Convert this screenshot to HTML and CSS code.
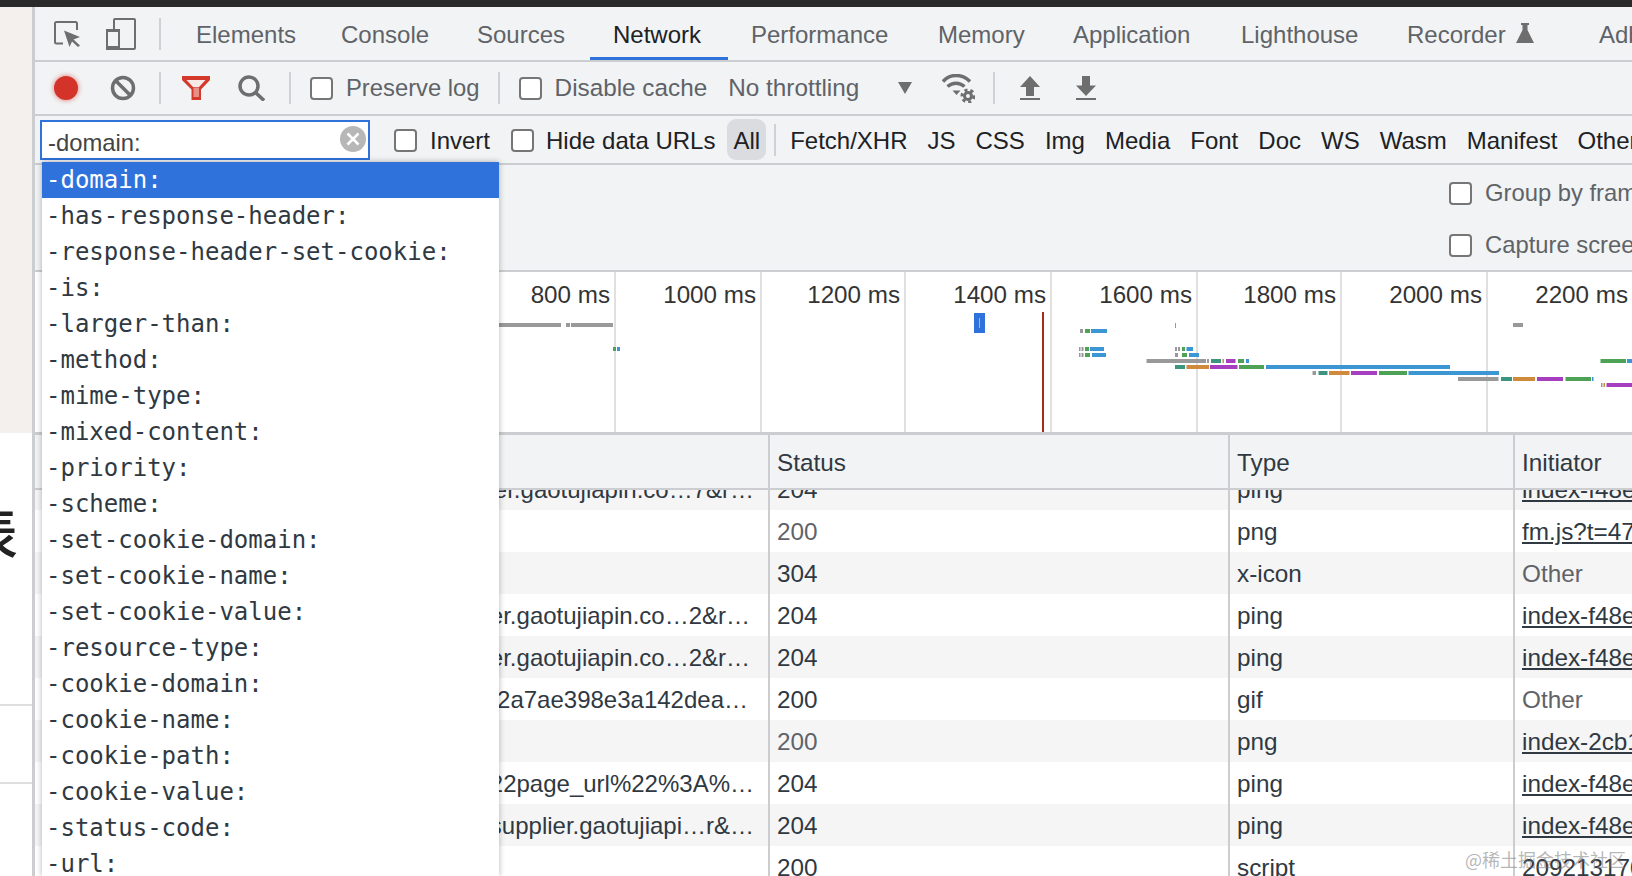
FILE: index.html
```html
<!DOCTYPE html>
<html lang="en">
<head>
<meta charset="utf-8">
<title>DevTools Network</title>
<link rel="stylesheet" href="styles.css">
</head>
<body>
<div class="app">
  <div class="topbar"></div>
  <div class="main">
    <aside class="page">
      <div class="page-upper"></div>
      <div class="page-lower">
        <div class="page-glyph">表</div>
        <div class="page-line first"></div>
        <div class="page-line second"></div>
      </div>
    </aside>
    <section class="devtools">
      <div class="scroll-mark"></div>
      <nav class="bar tabbar">
        <svg class="ic i-inspect" viewBox="0 0 26 26"><path class="ln" d="M9 22.500H2.500a1.500 1.500 0 0 1-1.500-1.500V2.500A1.500 1.500 0 0 1 2.500 1H21.500a1.500 1.500 0 0 1 1.500 1.500V9"/><path class="fl" d="M10 9.500 26 16l-6.500 2.500 6.500 6-2 1.500-6-5.500L15.500 26z"/></svg>
        <svg class="ic i-device" viewBox="0 0 30 32"><path class="ln" d="M8 11V2a1 1 0 0 1 1-1h19a1 1 0 0 1 1 1v28a1 1 0 0 1-1 1H14"/><rect class="ln" x="1" y="12" width="12" height="19" rx="1"/><rect class="fl" x="0" y="11" width="14" height="3"/><rect class="fl" x="0" y="28" width="14" height="4"/></svg>
        <span class="sep s-tabs"></span>
        <div class="tabs">
          <a class="tab">Elements</a>
          <a class="tab">Console</a>
          <a class="tab">Sources</a>
          <a class="tab active">Network</a>
          <a class="tab">Performance</a>
          <a class="tab">Memory</a>
          <a class="tab">Application</a>
          <a class="tab">Lighthouse</a>
          <a class="tab">Recorder<svg class="i-flask" viewBox="0 0 18 20"><path class="fl" d="M5 0h8v2h-1.500v5L18 20H0L6.500 7V2H5z"/></svg></a>
          <a class="tab">Adblock</a>
        </div>
      </nav>
      <div class="bar toolbar">
        <span class="record"></span>
        <svg class="ic i-clear" viewBox="0 0 26 26"><circle class="ln thick" cx="13" cy="13" r="10.500"/><path class="ln thick" d="M5.500 5.500l15 15"/></svg>
        <span class="sep s-clear"></span>
        <svg class="ic i-filter" viewBox="0 0 28 24"><path class="fun-o" d="M0 0h28v4l-9 9.500V24H9.500V13.500L0 4z"/><path class="fun-w" d="M4.500 4h19l-6.500 7h-6z"/><path class="fun-p" d="M11.500 11.500h5.500V21h-5.500z"/></svg>
        <svg class="ic i-search" viewBox="0 0 27 26"><circle class="ln thick" cx="11" cy="11" r="9"/><path class="ln thick" d="M17 17l9 8.500"/></svg>
        <span class="sep s-search"></span>
        <input class="cb cb-preserve" type="checkbox"><label class="lbl">Preserve log</label>
        <span class="sep s-preserve"></span>
        <input class="cb cb-cache" type="checkbox"><label class="lbl wide">Disable cache</label>
        <span class="lbl wide throttle">No throttling</span>
        <svg class="ic i-caret" viewBox="0 0 14 12"><path class="fl" d="M0 0h14L7 12z"/></svg>
        <svg class="ic i-wifi" viewBox="0 0 33 29"><path class="ln thick" d="M1 7.500C8-.5 20-.500 28 7.500"/><path class="ln thick" d="M5.500 12.500c5-4.500 12-4.500 17 0"/><path class="fl" d="M10.500 16.500h8L14.500 21z"/><circle class="ln gear" cx="26" cy="22" r="3.500"/><circle class="ln teeth" cx="26" cy="22" r="6"/></svg>
        <span class="sep s-wifi"></span>
        <svg class="ic i-arrow i-up" viewBox="0 0 20 24"><path class="fl" d="M10 0l10 11h-6v9H6v-9H0z"/><rect class="fl" y="22" width="20" height="2"/></svg>
        <svg class="ic i-arrow i-down" viewBox="0 0 20 24"><path class="fl" d="M6 0h8v9.500h6L10 20 0 9.500h6z"/><rect class="fl" y="22" width="20" height="2"/></svg>
      </div>
      <div class="bar filterbar">
        <div class="search">
          <span class="search-text">-domain:</span>
          <svg class="i-x" viewBox="0 0 26 26"><circle cx="13" cy="13" r="13" class="x-bg"/><path class="x-st" d="M7.500 7.500l11 11M18.500 7.500l-11 11"/></svg>
        </div>
        <input class="cb cb-invert" type="checkbox"><label class="lbl dark">Invert</label>
        <input class="cb cb-hide" type="checkbox"><label class="lbl dark">Hide data URLs</label>
        <span class="chip-all">All</span>
        <span class="sep s-all"></span>
        <span class="chip">Fetch/XHR</span>
        <span class="chip">JS</span>
        <span class="chip">CSS</span>
        <span class="chip">Img</span>
        <span class="chip">Media</span>
        <span class="chip">Font</span>
        <span class="chip">Doc</span>
        <span class="chip">WS</span>
        <span class="chip">Wasm</span>
        <span class="chip">Manifest</span>
        <span class="chip">Other</span>
      </div>
      <div class="settings">
        <div class="set-row"><input class="cb" type="checkbox"><label class="lbl">Group by frame</label></div>
        <div class="set-row"><input class="cb" type="checkbox"><label class="lbl">Capture screenshots</label></div>
      </div>
      <div class="overview">
        <div class="tick"><span>800 ms</span></div>
        <div class="tick"><span>1000 ms</span></div>
        <div class="tick"><span>1200 ms</span></div>
        <div class="tick"><span>1400 ms</span></div>
        <div class="tick"><span>1600 ms</span></div>
        <div class="tick"><span>1800 ms</span></div>
        <div class="tick"><span>2000 ms</span></div>
        <div class="tick"><span>2200 ms</span></div>
        <svg class="bars" viewBox="35 272 1597 160">
          <g class="g"><rect x="499" y="323" width="62" height="4"/><rect x="566" y="323" width="4" height="4"/><rect x="571" y="323" width="42" height="4"/><rect x="1513" y="323" width="10" height="4"/><rect x="1175" y="323" width="1" height="5"/>
            <rect x="1080" y="329" width="3" height="4"/><rect x="1079" y="347" width="1.500" height="4"/><rect x="1081.500" y="347" width="2" height="4"/><rect x="1079" y="353" width="1.500" height="4"/><rect x="1081.500" y="353" width="2" height="4"/><rect x="1175" y="347" width="2" height="4"/><rect x="1178" y="347" width="2" height="4"/><rect x="1175" y="353" width="3" height="4"/>
            <rect x="1146.500" y="359" width="59.500" height="4"/><rect x="1207" y="359" width="2" height="4"/><rect x="1312.500" y="371" width="3.500" height="4"/><rect x="1458" y="377" width="40.500" height="4"/><rect x="1601" y="383" width="1.500" height="4"/></g>
          <g class="gr"><rect x="613" y="347" width="3" height="4"/><rect x="1085" y="329" width="5" height="4"/><rect x="1085" y="347" width="4" height="4"/><rect x="1085" y="353" width="5" height="4"/><rect x="1182" y="347" width="3" height="4"/><rect x="1182" y="353" width="5" height="4"/><rect x="1238" y="359" width="6" height="4"/><rect x="1600.500" y="359" width="25.500" height="4"/><rect x="1239" y="365" width="25" height="4"/><rect x="1379" y="371" width="28" height="4"/><rect x="1565.500" y="377" width="25.500" height="4"/></g>
          <g class="bl"><rect x="617" y="347" width="3" height="4"/><rect x="1091" y="329" width="16" height="4"/><rect x="1090" y="347" width="14" height="4"/><rect x="1092" y="353" width="14" height="4"/><rect x="1186.500" y="347" width="6.500" height="4"/><rect x="1189" y="353" width="10" height="4"/><rect x="1246" y="359" width="3" height="4"/><rect x="1627" y="359" width="5" height="4"/><rect x="1266" y="365" width="184" height="4"/><rect x="1408.500" y="371" width="90.500" height="4"/><rect x="1592" y="377" width="1.500" height="4"/></g>
          <g class="te"><rect x="1211" y="359" width="10" height="4"/><rect x="1175" y="365" width="10" height="4"/><rect x="1318.500" y="371" width="9" height="4"/><rect x="1501" y="377" width="11" height="4"/></g>
          <g class="or"><rect x="1222.500" y="359" width="1.500" height="4"/><rect x="1186.500" y="365" width="22.500" height="4"/><rect x="1329" y="371" width="20.500" height="4"/><rect x="1513" y="377" width="22" height="4"/><rect x="1603.500" y="383" width="1.500" height="4"/></g>
          <g class="pu"><rect x="1226" y="359" width="9.500" height="4"/><rect x="1210" y="365" width="27.500" height="4"/><rect x="1351" y="371" width="26" height="4"/><rect x="1537" y="377" width="26" height="4"/><rect x="1606.500" y="383" width="25.500" height="4"/></g>
          <rect class="mark" x="974" y="313" width="11" height="20"/>
          <rect class="mark-in" x="979" y="318" width="1" height="10"/>
          <rect class="load" x="1042" y="312" width="2" height="120"/>
        </svg>
      </div>
      <div class="thead">
        <div class="th"></div>
        <div class="th">Status</div>
        <div class="th">Type</div>
        <div class="th">Initiator</div>
      </div>
      <div class="tbody">
        <div class="row first odd"><div class="td name p14">supplier.gaotujiapin.co…7&amp;r…</div><div class="td">204</div><div class="td">ping</div><div class="td link">index-f48e1b2c.js:1</div></div>
        <div class="row"><div class="td name"></div><div class="td muted">200</div><div class="td">png</div><div class="td link">fm.js?t=4761</div></div>
        <div class="row odd"><div class="td name"></div><div class="td">304</div><div class="td">x-icon</div><div class="td muted">Other</div></div>
        <div class="row"><div class="td name p18">supplier.gaotujiapin.co…2&amp;r…</div><div class="td">204</div><div class="td">ping</div><div class="td link">index-f48e1b2c.js:1</div></div>
        <div class="row odd"><div class="td name p18">supplier.gaotujiapin.co…2&amp;r…</div><div class="td">204</div><div class="td">ping</div><div class="td link">index-f48e1b2c.js:1</div></div>
        <div class="row"><div class="td name p20">2a7ae398e3a142dea…</div><div class="td">200</div><div class="td">gif</div><div class="td muted">Other</div></div>
        <div class="row odd"><div class="td name"></div><div class="td muted">200</div><div class="td">png</div><div class="td link">index-2cb1f0a3.js:1</div></div>
        <div class="row"><div class="td name p14">%222page_url%22%3A%…</div><div class="td">204</div><div class="td">ping</div><div class="td link">index-f48e1b2c.js:1</div></div>
        <div class="row odd"><div class="td name p14">supplier.gaotujiapi…r&amp;…</div><div class="td">204</div><div class="td">ping</div><div class="td link">index-f48e1b2c.js:1</div></div>
        <div class="row"><div class="td name"></div><div class="td">200</div><div class="td">script</div><div class="td link">209213170</div></div>
      </div>
    </section>
  </div>
  <ul class="suggest">
    <li class="on">-domain:</li>
    <li>-has-response-header:</li>
    <li>-response-header-set-cookie:</li>
    <li>-is:</li>
    <li>-larger-than:</li>
    <li>-method:</li>
    <li>-mime-type:</li>
    <li>-mixed-content:</li>
    <li>-priority:</li>
    <li>-scheme:</li>
    <li>-set-cookie-domain:</li>
    <li>-set-cookie-name:</li>
    <li>-set-cookie-value:</li>
    <li>-resource-type:</li>
    <li>-cookie-domain:</li>
    <li>-cookie-name:</li>
    <li>-cookie-path:</li>
    <li>-cookie-value:</li>
    <li>-status-code:</li>
    <li>-url:</li>
  </ul>
  <div class="watermark">@稀土掘金技术社区</div>
</div>
</body>
</html>
```

FILE: styles.css
```css
* { box-sizing: border-box; }
html, body { margin: 0; padding: 0; height: 100%; overflow: hidden; }
body { font-family: "Liberation Sans", Arial, sans-serif; font-size: 23.8px; color: #303942; background: #fff; }

.app { position: relative; width: 1632px; height: 876px; overflow: hidden; display: flex; flex-direction: column; }
.topbar { height: 7px; flex: none; background: #2a2a2a; }
.main { flex: 1; display: flex; min-height: 0; }

.page { width: 32px; flex: none; display: flex; flex-direction: column; background: #fff; overflow: hidden; }
.page-upper { height: 426px; flex: none; background: #f4f0ed; }
.page-lower { flex: 1; overflow: hidden; }
.page-glyph { height: 50px; margin-top: 72px; margin-left: -38px; width: 56px; font: 500 56px/50px "Noto Sans CJK SC", sans-serif; color: #222; }
.page-line { height: 2px; background: #dedede; }
.page-line.first { margin-top: 149px; }
.page-line.second { margin-top: 76px; }

.devtools { flex: 1; min-width: 0; position: relative; display: flex; flex-direction: column; background: #f1f3f4; border-left: 3px solid #cbcdd0; }
.scroll-mark { position: absolute; left: 0; top: 265px; width: 4px; height: 45px; background: #a9abae; }

.bar { display: flex; align-items: center; flex: none; border-bottom: 2px solid #cbcdd0; white-space: nowrap; overflow: hidden; }
.tabbar { height: 55px; }
.toolbar { height: 54px; }
.filterbar { height: 49px; font-size: 24px; }

.ic { flex: none; display: block; }
.ln { fill: none; stroke: #6e6e6e; stroke-width: 2; }
.ln.thick { stroke-width: 3.5; }
.fl { fill: #6e6e6e; }
.sep { flex: none; width: 2px; height: 32px; background: #cfd1d4; }

.i-inspect { width: 26px; height: 26px; margin-left: 19px; }
.i-device { width: 30px; height: 32px; margin-left: 26px; }
.s-tabs { margin-left: 23px; }
.tabs { display: grid; grid-template-columns: 145px 136px 136px 138px 187px 135px 168px 166px 192px auto; height: 100%; margin-left: 12px; font-size: 24px; }
.tab { display: flex; align-items: center; padding: 2px 0 0 23px; color: #5f6368; position: relative; }
.tab.active { color: #202124; }
.tab.active::after { content: ""; position: absolute; left: 0; right: 0; bottom: 0; height: 3px; background: #3072dc; }
.i-flask { width: 18px; height: 20px; margin-left: 10px; margin-top: -4px; }

.record { flex: none; width: 24px; height: 24px; margin-left: 19px; border-radius: 50%; background: #d4332a; box-shadow: 0 0 4px 1px rgba(212, 51, 42, .45); }
.i-clear { width: 26px; height: 26px; margin-left: 32px; }
.s-clear { margin-left: 23px; }
.i-filter { width: 28px; height: 24px; margin-left: 21px; }
.fun-o { fill: #d33a2c; }
.fun-w { fill: #f8e9e7; }
.fun-p { fill: #e78f87; }
.i-search { width: 27px; height: 26px; margin-left: 28px; }
.s-search { margin-left: 24px; }

.cb { appearance: none; -webkit-appearance: none; flex: none; width: 23px; height: 23px; margin: 0; background: #fff; border: 2px solid #767676; border-radius: 4px; }
.lbl { color: #5f6368; margin-left: 13px; flex: none; }
.lbl.dark { color: #202124; padding-top: 2px; }
.lbl.wide { font-size: 24.300px; }
.cb-preserve { margin-left: 19px; }
.s-preserve { margin-left: 18px; }
.cb-cache { margin-left: 19px; }
.throttle { margin-left: 21px; }
.i-caret { width: 14px; height: 12px; margin-left: 39px; margin-top: -1px; }
.i-wifi { width: 33px; height: 29px; margin-left: 30px; }
.gear { stroke-width: 3; }
.teeth { stroke-width: 3; stroke-dasharray: 3 3; }
.s-wifi { margin-left: 18px; }
.i-arrow { width: 20px; height: 24px; }
.i-up { margin-left: 25px; }
.i-down { margin-left: 36px; }

.search { flex: none; display: flex; align-items: center; justify-content: space-between; width: 330px; height: 40px; margin-left: 5px; padding: 0 2px 0 6px; background: #fff; border: 2px solid #3072dc; font-size: 23.8px; }
.search-text { color: #444; padding-top: 6px; }
.i-x { width: 26px; height: 26px; margin-top: -2px; }
.x-bg { fill: #b7b7b7; }
.x-st { stroke: #fff; stroke-width: 2.500; fill: none; }
.cb-invert { margin-left: 24px; margin-top: 1px; }
.cb-hide { margin-left: 21px; margin-top: 1px; }
.cb-hide + .lbl { margin-left: 12px; }
.chip-all { flex: none; margin-left: 12px; height: 41px; padding: 2px 6px 0; display: flex; align-items: center; background: #dadce0; border-radius: 9px; color: #202124; }
.s-all { margin-left: 8px; margin-right: 4px; }
.chip { flex: none; padding: 2px 10px 0; color: #202124; }

.settings { flex: none; height: 105px; padding: 1px 0 0 1414px; background: #f1f3f4; white-space: nowrap; overflow: hidden; }
.set-row { height: 52px; display: flex; align-items: center; padding-top: 2px; }

.overview { flex: none; height: 165px; position: relative; display: grid; grid-template-columns: 581px 146px 144px 146px 146px 144px 146px 144px; grid-template-rows: 160px; background: #fff; border-top: 2px solid #cbcdd0; border-bottom: 3px solid #cbcdd0; overflow: hidden; font-size: 24.200px; }
.tick { border-right: 2px solid #e0e0e0; text-align: right; padding: 9px 4px 0 0; line-height: 28px; color: #333; }
.tick:last-of-type { border-right: 0; padding-right: 4px; }
.bars { position: absolute; left: 0; top: 0; width: 1597px; height: 160px; }
.g { fill: #999; }
.gr { fill: #4ea255; }
.bl { fill: #3c96d3; }
.te { fill: #3d9480; }
.or { fill: #d08a3c; }
.pu { fill: #a53fc0; }
.mark { fill: #3072dc; }
.mark-in { fill: #9ab8ea; }
.load { fill: #a52a1a; }

.thead, .row { display: grid; grid-template-columns: 733px 460px 285px 119px; font-size: 24.300px; }
.thead { flex: none; height: 55px; background: #f1f3f4; border-bottom: 2px solid #cbcdd0; }
.th { display: flex; align-items: center; padding: 3px 0 0 7px; border-left: 2px solid #cbcdd0; }
.th:first-child { border-left: 0; }
.tbody { flex: 1; min-height: 0; overflow: hidden; background: #fff; }
.row { height: 42px; background: #fff; }
.row.first { margin-top: -22px; }
.row.odd { background: #f5f5f6; }
.td { display: flex; align-items: center; padding: 2px 0 0 7px; border-left: 2px solid #cbcdd0; white-space: nowrap; overflow: hidden; }
.td.name { border-left: 0; justify-content: flex-end; padding-left: 0; font-size: 24px; }
.td.p14 { padding-right: 14px; }
.td.p18 { padding-right: 18px; }
.td.p20 { padding-right: 20px; }
.muted { color: #5f6368; }
.link { text-decoration: underline; }

.suggest { position: absolute; left: 42px; top: 162px; width: 457px; height: 714px; margin: 0; padding: 0; list-style: none; background: #fff; box-shadow: 0 0 6px rgba(0, 0, 0, .3); font-family: "DejaVu Sans Mono", monospace; font-size: 24px; color: #303942; }
.suggest li { height: 36px; line-height: 36px; padding-left: 4px; white-space: nowrap; }
.suggest li.on { background: #3072dc; color: #fff; }

.watermark { position: absolute; right: 6px; top: 846px; font: 18px "Noto Sans CJK SC", sans-serif; color: rgba(120, 120, 120, .55); }
```
